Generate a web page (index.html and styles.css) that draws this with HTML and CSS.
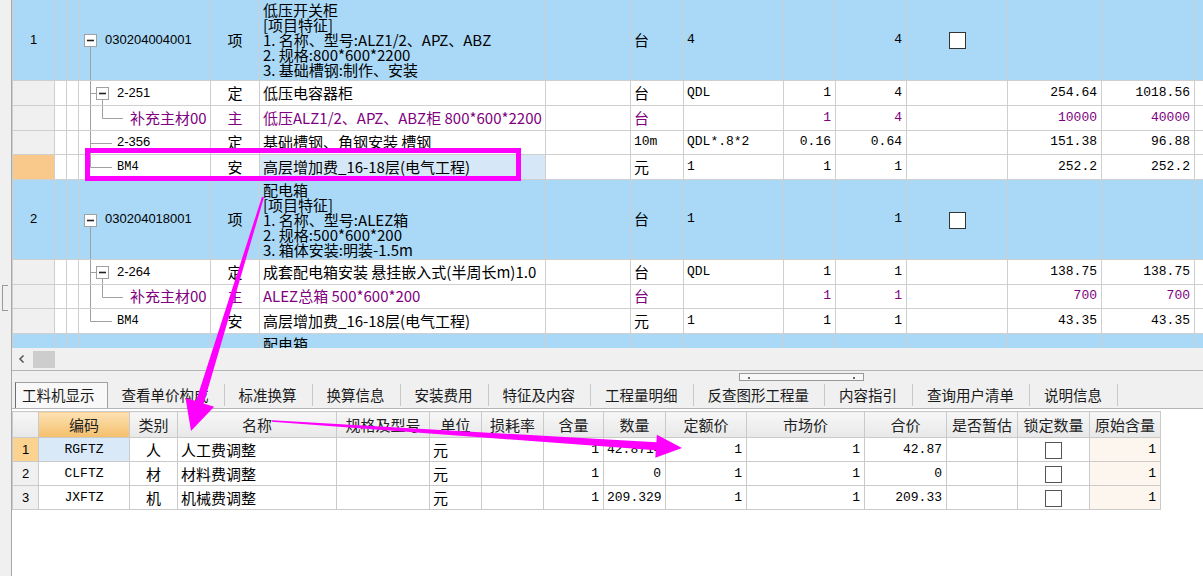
FILE: index.html
```html
<!DOCTYPE html>
<html>
<head>
<meta charset="utf-8">
<link rel="stylesheet" href="styles.css">
</head>
<body>
<div class="app">
  <div class="side"><span class="side-handle"></span></div>
  <div class="main">
    <div class="top">
      <table class="tg">
        <colgroup>
          <col style="width:42px"><col style="width:12px"><col style="width:12px"><col style="width:132px"><col style="width:49px"><col style="width:286px"><col style="width:85px"><col style="width:53px"><col style="width:100px"><col style="width:52px"><col style="width:71px"><col style="width:101px"><col style="width:94px"><col style="width:93px"><col style="width:40px">
        </colgroup>
        <tr class="blue h80">
          <td class="rh">1</td><td></td><td></td>
          <td class="code i1"><svg class="tree" width="60" height="80"><path d="M11.5 47V80" stroke="#a0a0a0"/><rect x="5.5" y="34.5" width="12" height="12" fill="#fff" stroke="#a0a0a0"/><path d="M8 40.5h7" stroke="#222" stroke-width="1.6"/></svg>030204004001</td>
          <td class="ty">项</td>
          <td class="feat">低压开关柜<br>[项目特征]<br>1. 名称、型号:ALZ1/2、APZ、ABZ<br>2. 规格:800*600*2200<br>3. 基础槽钢:制作、安装</td>
          <td></td><td>台</td><td class="lat">4</td><td></td><td class="num">4</td><td class="ck"><span class="cb"></span></td><td></td><td></td><td></td>
        </tr>
        <tr class="h25">
          <td class="rh"></td><td></td><td></td>
          <td class="code i2"><svg class="tree" width="60" height="25"><path d="M11.5 0V25M11.5 12.5H17M23.5 19V25" stroke="#a0a0a0"/><rect x="17.5" y="6.5" width="12" height="12" fill="#fff" stroke="#a0a0a0"/><path d="M20 12.5h7" stroke="#222" stroke-width="1.6"/></svg>2-251</td>
          <td class="ty">定</td><td>低压电容器柜</td><td></td><td>台</td><td class="lat">QDL</td><td class="num">1</td><td class="num">4</td><td></td><td class="num">254.64</td><td class="num">1018.56</td><td></td>
        </tr>
        <tr class="h25 pur">
          <td class="rh"></td><td></td><td></td>
          <td class="code i3 sub"><svg class="tree" width="60" height="25"><path d="M11.5 0V25M23.5 0V12.5H44" stroke="#a0a0a0"/></svg>补充主材00</td>
          <td class="ty">主</td><td>低压ALZ1/2、APZ、ABZ柜 800*600*2200</td><td></td><td>台</td><td></td><td class="num">1</td><td class="num">4</td><td></td><td class="num">10000</td><td class="num">40000</td><td></td>
        </tr>
        <tr class="h24">
          <td class="rh"></td><td></td><td></td>
          <td class="code i2"><svg class="tree" width="60" height="24"><path d="M11.5 0V24M11.5 12.5H33" stroke="#a0a0a0"/></svg>2-356</td>
          <td class="ty">定</td><td>基础槽钢、角钢安装 槽钢</td><td></td><td class="lat">10m</td><td class="lat">QDL*.8*2</td><td class="num">0.16</td><td class="num">0.64</td><td></td><td class="num">151.38</td><td class="num">96.88</td><td></td>
        </tr>
        <tr class="h25 sel">
          <td class="rh"></td><td></td><td></td>
          <td class="code i2 mono"><svg class="tree" width="60" height="25"><path d="M11.5 0V12.5H33" stroke="#a0a0a0"/></svg>BM4</td>
          <td class="ty">安</td><td class="curname">高层增加费_16-18层(电气工程)</td><td></td><td>元</td><td class="lat">1</td><td class="num">1</td><td class="num">1</td><td></td><td class="num">252.2</td><td class="num">252.2</td><td></td>
        </tr>
        <tr class="blue h80">
          <td class="rh">2</td><td></td><td></td>
          <td class="code i1"><svg class="tree" width="60" height="80"><path d="M11.5 47V80" stroke="#a0a0a0"/><rect x="5.5" y="34.5" width="12" height="12" fill="#fff" stroke="#a0a0a0"/><path d="M8 40.5h7" stroke="#222" stroke-width="1.6"/></svg>030204018001</td>
          <td class="ty">项</td>
          <td class="feat">配电箱<br>[项目特征]<br>1. 名称、型号:ALEZ箱<br>2. 规格:500*600*200<br>3. 箱体安装:明装-1.5m</td>
          <td></td><td>台</td><td class="lat">1</td><td></td><td class="num">1</td><td class="ck"><span class="cb"></span></td><td></td><td></td><td></td>
        </tr>
        <tr class="h25">
          <td class="rh"></td><td></td><td></td>
          <td class="code i2"><svg class="tree" width="60" height="25"><path d="M11.5 0V25M11.5 12.5H17M23.5 19V25" stroke="#a0a0a0"/><rect x="17.5" y="6.5" width="12" height="12" fill="#fff" stroke="#a0a0a0"/><path d="M20 12.5h7" stroke="#222" stroke-width="1.6"/></svg>2-264</td>
          <td class="ty">定</td><td>成套配电箱安装 悬挂嵌入式(半周长m)1.0</td><td></td><td>台</td><td class="lat">QDL</td><td class="num">1</td><td class="num">1</td><td></td><td class="num">138.75</td><td class="num">138.75</td><td></td>
        </tr>
        <tr class="h24 pur">
          <td class="rh"></td><td></td><td></td>
          <td class="code i3 sub"><svg class="tree" width="60" height="24"><path d="M11.5 0V24M23.5 0V12.5H44" stroke="#a0a0a0"/></svg>补充主材00</td>
          <td class="ty">主</td><td>ALEZ总箱 500*600*200</td><td></td><td>台</td><td></td><td class="num">1</td><td class="num">1</td><td></td><td class="num">700</td><td class="num">700</td><td></td>
        </tr>
        <tr class="h25">
          <td class="rh"></td><td></td><td></td>
          <td class="code i2 mono"><svg class="tree" width="60" height="25"><path d="M11.5 0V12.5H33" stroke="#a0a0a0"/></svg>BM4</td>
          <td class="ty">安</td><td>高层增加费_16-18层(电气工程)</td><td></td><td>元</td><td class="lat">1</td><td class="num">1</td><td class="num">1</td><td></td><td class="num">43.35</td><td class="num">43.35</td><td></td>
        </tr>
        <tr class="blue h80">
          <td class="rh">3</td><td></td><td></td>
          <td class="code i1"></td>
          <td class="ty"></td>
          <td class="feat">配电箱<br>[项目特征]</td>
          <td></td><td></td><td></td><td></td><td></td><td></td><td></td><td></td><td></td>
        </tr>
      </table>
    </div>
    <div class="hscroll">
      <span class="sbtn"><svg width="8" height="10"><path d="M5.5 1.5L2 5l3.5 3.5" fill="none" stroke="#555" stroke-width="1.5"/></svg></span>
      <span class="thumb"></span>
    </div>
    <div class="tabbar">
      <span class="tab active">工料机显示</span>
      <span class="tab">查看单价构成</span><i class="sep"></i>
      <span class="tab">标准换算</span><i class="sep"></i>
      <span class="tab">换算信息</span><i class="sep"></i>
      <span class="tab">安装费用</span><i class="sep"></i>
      <span class="tab">特征及内容</span><i class="sep"></i>
      <span class="tab">工程量明细</span><i class="sep"></i>
      <span class="tab">反查图形工程量</span><i class="sep"></i>
      <span class="tab">内容指引</span><i class="sep"></i>
      <span class="tab">查询用户清单</span><i class="sep"></i>
      <span class="tab">说明信息</span><i class="sep"></i>
    </div>
    <div class="bottom">
      <table class="bg">
        <colgroup>
          <col style="width:26px"><col style="width:91px"><col style="width:48px"><col style="width:159px"><col style="width:93px"><col style="width:52px"><col style="width:62px"><col style="width:60px"><col style="width:62px"><col style="width:81px"><col style="width:118px"><col style="width:82px"><col style="width:71px"><col style="width:72px"><col style="width:71px">
        </colgroup>
        <tr>
          <th></th><th class="hsel">编码</th><th>类别</th><th>名称</th><th>规格及型号</th><th>单位</th><th>损耗率</th><th>含量</th><th>数量</th><th>定额价</th><th>市场价</th><th>合价</th><th>是否暂估</th><th>锁定数量</th><th>原始含量</th>
        </tr>
        <tr>
          <td class="rh rsel">1</td><td class="c lat cur">RGFTZ</td><td class="c">人</td><td>人工费调整</td><td></td><td>元</td><td></td><td class="num">1</td><td class="num">42.87146</td><td class="num">1</td><td class="num">1</td><td class="num">42.87</td><td></td><td class="c"><span class="cb2"></span></td><td class="num orig">1</td>
        </tr>
        <tr>
          <td class="rh">2</td><td class="c lat">CLFTZ</td><td class="c">材</td><td>材料费调整</td><td></td><td>元</td><td></td><td class="num">1</td><td class="num">0</td><td class="num">1</td><td class="num">1</td><td class="num">0</td><td></td><td class="c"><span class="cb2"></span></td><td class="num orig">1</td>
        </tr>
        <tr>
          <td class="rh">3</td><td class="c lat">JXFTZ</td><td class="c">机</td><td>机械费调整</td><td></td><td>元</td><td></td><td class="num">1</td><td class="num">209.329</td><td class="num">1</td><td class="num">1</td><td class="num">209.33</td><td></td><td class="c"><span class="cb2"></span></td><td class="num orig">1</td>
        </tr>
      </table>
    </div>
  </div>
  <div class="grip"><i></i><i></i></div>
  <svg class="annot" width="1203" height="576">
    <rect x="87.5" y="150.5" width="431" height="28" fill="none" stroke="#f0f" stroke-width="5"/>
    <polygon fill="#f0f" points="262,196.7 264,197.3 203.6,403.5 214.1,406.7 191,431 185.5,397.9 196,401.1"/>
    <polygon fill="#f0f" points="272.05,420.25 656.4,442.3 656.9,434.8 682,448 655.3,457.8 655.8,450.3 271.95,421.75"/>
  </svg>
</div>
</body>
</html>
```

FILE: styles.css
```css
* { box-sizing: border-box; }
html, body { margin: 0; padding: 0; }
body {
  width: 1203px;
  height: 576px;
  overflow: hidden;
  background: #f0f0f0;
  font-family: "Noto Sans CJK SC", sans-serif;
  color: #000;
}
.app {
  position: relative;
  display: flex;
  width: 1203px;
  height: 576px;
}
.side {
  width: 12px;
  flex: none;
  background: #f0f0f0;
  border-right: 1px solid #a8a8a8;
  display: flex;
  flex-direction: column;
}
.side-handle {
  margin: 285px 0 0 2px;
  width: 6px;
  height: 26px;
  border: 1px solid #9a9a9a;
  border-right: none;
}
.main {
  flex: 1;
  min-width: 0;
  display: flex;
  flex-direction: column;
  overflow: hidden;
}
.top {
  height: 348px;
  flex: none;
  overflow: hidden;
  background: #fff;
}
table {
  border-collapse: collapse;
  table-layout: fixed;
}
.tg { width: 1222px; font-size: 15px; }
.tg td {
  border: 1px solid #cfcfcf;
  padding: 0 3px;
  white-space: nowrap;
  overflow: hidden;
  vertical-align: middle;
  line-height: 18px;
}
.tg tr:first-child td { border-top: none; }
.tg tr.h80 td { height: 80px; }
.tg tr.h25 td { height: 25px; }
.tg tr.h24 td { height: 24px; }
.tg tr.blue td { background: #a9d9f7; }
.tg tr.pur td { color: #800080; }
.tg td.rh {
  background: #f0f0f0;
  text-align: center;
  font-family: "Liberation Sans", sans-serif;
  font-size: 13px;
}
.tg tr.sel td.rh { background: #f9c98b; }
.tg tr.sel td.curname { background: #d6e8f7; }
.tg td.code {
  position: relative;
  font-family: "Liberation Sans", sans-serif;
  font-size: 13px;
}
.tg td.code.sub { font-family: "Noto Sans CJK SC", sans-serif; font-size: 15px; }
.tg td.code.mono { font-family: "Liberation Mono", monospace; font-size: 12px; }
.tg td.i1 { padding-left: 26px; }
.tg td.i2 { padding-left: 38px; }
.tg td.i3 { padding-left: 51px; }
.tree { position: absolute; left: 0; top: 0; }
.tree path { fill: none; }
.tg td.ty { text-align: center; }
.tg td.feat {
  vertical-align: top;
  padding-top: 2px;
  line-height: 15px;
}
.tg td.lat, .tg td.num {
  font-family: "Liberation Mono", monospace;
  font-size: 13px;
}
.tg td.num { text-align: right; padding-right: 4px; }
.tg td.ck { text-align: center; }
.cb {
  display: inline-block;
  width: 17px;
  height: 17px;
  border: 1.5px solid #333;
  background: #fff;
  vertical-align: middle;
}
.hscroll {
  height: 22px;
  flex: none;
  display: flex;
  align-items: center;
  background: #f0f0f0;
  padding-left: 1px;
}
.sbtn {
  width: 17px;
  height: 17px;
  display: flex;
  align-items: center;
  justify-content: center;
}
.thumb {
  margin-left: 3px;
  width: 22px;
  height: 17px;
  background: #cdcdcd;
}
.tabbar {
  height: 38px;
  flex: none;
  border-top: 1px solid #b4b4b4;
  display: flex;
  align-items: flex-end;
  padding-left: 3px;
  background: #f0f0f0;
}
.tab {
  height: 25px;
  line-height: 24px;
  font-size: 14.5px;
  color: #1a1a1a;
  padding: 0 15px 0 14px;
  white-space: nowrap;
}
.tab.active {
  height: 26px;
  border: 1px solid #a0a0a0;
  border-left-color: #6e6e6e;
  border-bottom: none;
  background: #f8f8f8;
  padding: 0 12px 0 6px;
}
.sep {
  width: 1px;
  height: 22px;
  margin-bottom: 2px;
  background: #c8c8c8;
}
.bottom {
  flex: 1;
  background: #fff;
  border-top: 1px solid #b5b5b5;
  padding-top: 2px;
}
.bg { width: 1148px; font-size: 15px; }
.bg th, .bg td {
  border: 1px solid #cacaca;
  height: 24px;
  padding: 0 3px;
  white-space: nowrap;
  overflow: hidden;
  line-height: 18px;
  vertical-align: middle;
}
.bg th {
  height: 26px;
  font-weight: normal;
  color: #222;
  background: linear-gradient(#f7f7f7, #e8e8e8);
}
.bg th.hsel { background: linear-gradient(#fde2b3, #f4bf6c); }
.bg td.rh {
  background: #f0f0f0;
  text-align: center;
  font-family: "Liberation Sans", sans-serif;
  font-size: 13px;
}
.bg td.rsel { background: #fbd28f; }
.bg td.c { text-align: center; }
.bg td.lat { font-family: "Liberation Mono", monospace; font-size: 13px; }
.bg td.cur { background: #d9e9f8; }
.bg td.num {
  text-align: right;
  font-family: "Liberation Mono", monospace;
  font-size: 13px;
  padding-right: 4px;
}
.bg td.orig { background: #fdf6ef; }
.cb2 {
  display: inline-block;
  width: 17px;
  height: 17px;
  border: 1px solid #555;
  background: #fff;
  vertical-align: middle;
}
.grip {
  position: absolute;
  left: 739px;
  top: 373px;
  width: 125px;
  height: 8px;
  border: 1px solid #999;
  background: #f8f8f8;
  display: flex;
  justify-content: space-between;
  align-items: flex-end;
  padding: 0 8px 1px;
}
.grip i {
  width: 2px;
  height: 2px;
  background: #666;
}
.annot {
  position: absolute;
  left: 0;
  top: 0;
  pointer-events: none;
}
```
